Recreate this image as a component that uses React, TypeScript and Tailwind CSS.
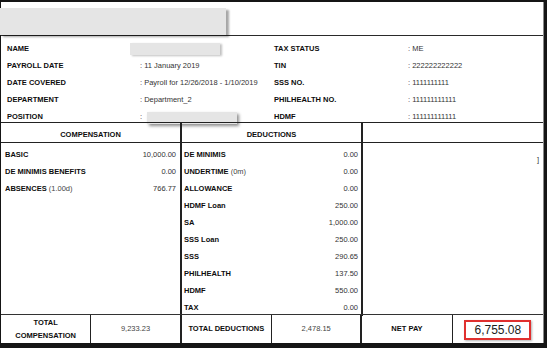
const info: [string, string, string, string][] = [
  ["NAME", "", "TAX STATUS", ": ME"],
  ["PAYROLL DATE", ": 11 January 2019", "TIN", ": 222222222222"],
  ["DATE COVERED", ": Payroll for 12/26/2018 - 1/10/2019", "SSS NO.", ": 1111111111"],
  ["DEPARTMENT", ": Department_2", "PHILHEALTH NO.", ": 111111111111"],
  ["POSITION", ":", "HDMF", ": 111111111111"],
];

const compensation: [string, string, string][] = [
  ["BASIC", "", "10,000.00"],
  ["DE MINIMIS BENEFITS", "", "0.00"],
  ["ABSENCES", " (1.00d)", "766.77"],
];

const deductions: [string, string, string][] = [
  ["DE MINIMIS", "", "0.00"],
  ["UNDERTIME", " (0m)", "0.00"],
  ["ALLOWANCE", "", "0.00"],
  ["HDMF Loan", "", "250.00"],
  ["SA", "", "1,000.00"],
  ["SSS Loan", "", "250.00"],
  ["SSS", "", "290.65"],
  ["PHILHEALTH", "", "137.50"],
  ["HDMF", "", "550.00"],
  ["TAX", "", "0.00"],
];

function Redacted({ className }: { className: string }) {
  return <div className={`bg-[#e5e5e5] ${className}`} />;
}

function LineItem({ item }: { item: [string, string, string] }) {
  const [label, note, amount] = item;
  return (
    <div className="flex h-[17px] items-center justify-between">
      <span className="font-bold text-[#0d0d0d]">
        {label}
        {note && <span className="font-normal text-[#444]">{note}</span>}
      </span>
      <span className="text-[#333]">{amount}</span>
    </div>
  );
}

export default function App() {
  return (
    <div className="h-[348px] w-[547px] bg-[#151515] pb-[5px] pl-[1px] pr-[3px] pt-[2px] font-['Liberation_Sans',Arial,sans-serif] text-[7.5px] leading-none">
      <div className="flex h-full flex-col border-r border-[#8a8a8a] bg-white">
        {/* blanked company header */}
        <div className="h-[34px] shrink-0 border-b border-[#2a2a2a] pt-[6px]">
          <Redacted className="ml-[-1px] h-[27px] w-[226px] shadow-[3px_2px_2px_rgba(0,0,0,0.35)]" />
        </div>

        {/* employee info */}
        <div className="h-[86px] shrink-0 pl-[6px] pt-[4px]">
          {info.map(([l1, v1, l2, v2], i) => (
            <div key={l1} className="grid h-[17px] grid-cols-[133px_134px_134px_1fr] items-center">
              <span className="font-bold text-[#0d0d0d]">{l1}</span>
              <span className="flex items-center text-[#333]">
                {i === 0 && (
                  <Redacted className="ml-[-10px] h-[12px] w-[90px] shadow-[2px_1px_2px_rgba(0,0,0,0.25)]" />
                )}
                {v1}
                {i === 4 && (
                  <Redacted className="ml-[5px] mt-[3px] h-[12px] w-[90px] shadow-[2px_2px_3px_rgba(0,0,0,0.45)]" />
                )}
              </span>
              <span className="font-bold text-[#0d0d0d]">{l2}</span>
              <span className="text-[#333]">{v2}</span>
            </div>
          ))}
        </div>

        {/* table */}
        <div className="grid shrink-0 grid-cols-[181px_181px_1fr] border-y border-[#222]">
          <div className="flex h-[19px] items-center justify-center border-r-2 border-[#222] pt-[4px] font-bold text-[#0d0d0d]">
            COMPENSATION
          </div>
          <div className="flex h-[19px] items-center justify-center border-r-2 border-[#222] pt-[4px] font-bold text-[#0d0d0d]">
            DEDUCTIONS
          </div>
          <div />
        </div>
        <div className="grid h-[171px] shrink-0 grid-cols-[181px_181px_1fr]">
          <div className="border-r-2 border-[#222] pl-[4px] pr-[4px] pt-[3px]">
            {compensation.map((c) => (
              <LineItem key={c[0]} item={c} />
            ))}
          </div>
          <div className="border-r-2 border-[#222] pl-[2px] pr-[3px] pt-[3px]">
            {deductions.map((d) => (
              <LineItem key={d[0]} item={d} />
            ))}
          </div>
          <div className="pr-[4px] pt-[13px] text-right text-[#333]">]</div>
        </div>

        {/* totals */}
        <div className="grid h-[29px] shrink-0 grid-cols-6 border-t border-[#333] text-center">
          <div className="flex flex-col items-center justify-center gap-[5px] border-r border-[#222] font-bold text-[#0d0d0d]">
            <span>TOTAL</span>
            <span>COMPENSATION</span>
          </div>
          <div className="flex items-center justify-center border-r-2 border-[#222] text-[#444]">9,233.23</div>
          <div className="flex items-center justify-center border-r border-[#222] font-bold text-[#0d0d0d]">
            TOTAL DEDUCTIONS
          </div>
          <div className="flex items-center justify-center border-r-2 border-[#222] text-[#444]">2,478.15</div>
          <div className="flex items-center justify-center border-r border-[#222] font-bold text-[#0d0d0d]">NET PAY</div>
          <div className="flex items-center justify-center pt-[1px]">
            <div className="flex h-[20px] w-[67px] items-center justify-center border-2 border-[#e0302f] text-[12px] text-[#1c1c1c] shadow-[1px_1px_2px_rgba(0,0,0,0.3)]">
              6,755.08
            </div>
          </div>
        </div>
      </div>
    </div>
  );
}
